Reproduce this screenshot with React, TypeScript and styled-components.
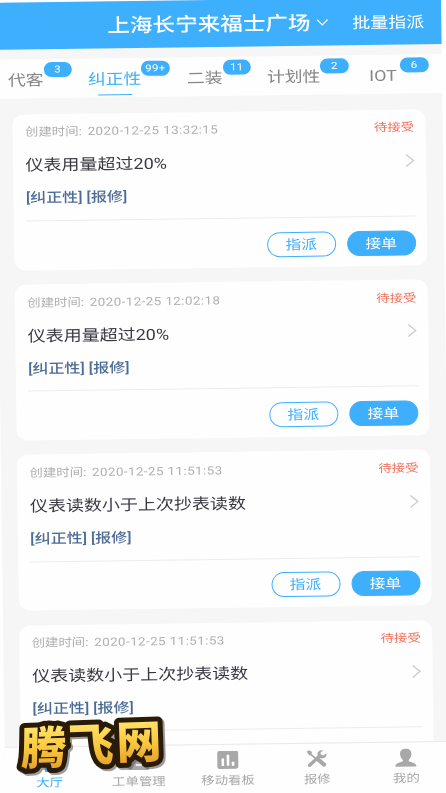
import React from 'react';
import styled, { createGlobalStyle } from 'styled-components';

const BLUE = '#3eaffd';

const GlobalStyle = createGlobalStyle`
  * { box-sizing: border-box; }
  html, body { margin: 0; height: 100%; overflow: hidden; background: #fefefe; }
  body { font-family: Roboto, "Noto Sans CJK SC", sans-serif; }
`;

const Viewport = styled.div`
  position: relative;
  width: 446px;
  height: 793px;
  overflow: hidden;
  background: #fefefe;
`;

const Screen = styled.div`
  display: flex;
  flex-direction: column;
  width: 446px;
  height: 800px;
  background: #f6f6f6;
  transform-origin: 0 0;
  transform: translate(-5px, 2.8px) rotate(-0.74deg);
`;

const Label = styled.span<{ $size: number; $color: string; $weight?: number; $spacing?: number }>`
  display: inline-block;
  font-size: ${(p) => p.$size}px;
  line-height: 1.2;
  color: ${(p) => p.$color};
  font-weight: ${(p) => p.$weight ?? 400};
  letter-spacing: ${(p) => p.$spacing ?? 0}px;
  white-space: pre;
  transform: scaleY(0.85);
`;

const Header = styled.header`
  display: flex;
  align-items: center;
  flex: none;
  height: 47px;
  padding: 3px 17px 0 112px;
  background: ${BLUE};
`;

const HeaderArrow = styled.svg`
  margin-left: 6px;
  margin-right: auto;
  margin-bottom: 2px;
`;

const Tabs = styled.nav`
  display: grid;
  grid-template-columns: 80px 99px 80px 99px 1fr;
  flex: none;
  height: 39px;
  margin-top: 10px;
  padding-left: 12px;
  background: #fefefe;
`;

const Tab = styled.div`
  display: flex;
  align-items: flex-start;
`;

const TabName = styled.div<{ $active?: boolean }>`
  display: flex;
  flex-direction: column;
  align-items: center;
  height: 37px;
  padding-top: 10px;

  &::after {
    content: '';
    width: 34px;
    height: 1.5px;
    margin-top: auto;
    background: ${(p) => (p.$active ? BLUE : 'transparent')};
  }
`;

const Badge = styled.span`
  display: flex;
  align-items: center;
  justify-content: center;
  width: 28.5px;
  height: 15.5px;
  margin-top: 2.5px;
  padding-top: 1.5px;
  border-radius: 8px;
  background: ${BLUE};
`;

const List = styled.main`
  display: flex;
  flex-direction: column;
  gap: 14.4px;
  flex: none;
  height: 647.5px;
  padding: 15.5px 17.3px 0 16.2px;
  overflow: hidden;
`;

const Card = styled.article`
  flex: none;
  height: 156px;
  padding: 0 11.2px 0 12.2px;
  border-radius: 11px;
  background: #fefefe;
`;

const Row = styled.div<{ $h: number }>`
  display: flex;
  align-items: center;
  justify-content: space-between;
  height: ${(p) => p.$h}px;
`;

const CardTop = styled(Row)`
  padding-top: 5.5px;
`;

const TitleRow = styled(Row)`
  padding-top: 2px;
`;

const TagRow = styled(Row)`
  padding-bottom: 7px;
`;

const Actions = styled.div`
  display: flex;
  align-items: center;
  justify-content: flex-end;
  gap: 11px;
  height: 49px;
  padding-top: 4px;
  border-top: 1px solid #ececec;
`;

const Button = styled.button<{ $solid?: boolean }>`
  display: flex;
  align-items: center;
  justify-content: center;
  width: 69px;
  height: 25px;
  padding: 2px 0 0;
  border: 1.5px solid ${BLUE};
  border-radius: 13px;
  background: ${(p) => (p.$solid ? BLUE : '#fefefe')};
  font-family: inherit;
`;

const Time = styled.span`
  margin-left: 2px;
  letter-spacing: 0.42px;
`;

const BottomNav = styled.nav`
  display: grid;
  grid-template-columns: repeat(5, 1fr);
  flex: 1;
  border-top: 1px solid #e9e9e9;
  background: #fefefe;
`;

const NavItem = styled.div`
  display: flex;
  flex-direction: column;
  align-items: center;
  padding-top: 6.5px;
  gap: 3px;
`;

const Logo = styled.svg`
  position: absolute;
  left: 8px;
  top: 708px;
  overflow: visible;
  filter: drop-shadow(2px 2px 0.6px rgba(90, 90, 90, 0.6));
`;

const LogoGlyph = styled.text`
  font-family: "Noto Sans CJK SC", sans-serif;
  font-size: 45px;
  font-weight: 800;
  fill: url(#gold);
  stroke: #2a1b08;
  stroke-width: 10px;
  stroke-linejoin: round;
  paint-order: stroke;
`;

const tabs = [
  { name: '代客', badge: '3' },
  { name: '纠正性', badge: '99+', active: true },
  { name: '二装', badge: '11' },
  { name: '计划性', badge: '2' },
  { name: 'IOT', badge: '6' },
];

const orders = [
  { time: '2020-12-25 13:32:15', title: '仪表用量超过20%', actions: true },
  { time: '2020-12-25 12:02:18', title: '仪表用量超过20%', actions: true },
  { time: '2020-12-25 11:51:53', title: '仪表读数小于上次抄表读数', actions: true },
  { time: '2020-12-25 11:51:53', title: '仪表读数小于上次抄表读数', actions: false },
];

const gray = '#a8a8a8';

const icons = {
  hall: <path d="M11 4 3 11h3v8h10v-8h3Z" fill={BLUE} />,
  orders: (
    <>
      <rect x="0.5" y="0" width="21" height="18" rx="2" fill={gray} />
      <path d="M6 6h10M8 13h6" stroke="#fefefe" strokeWidth="1.6" />
    </>
  ),
  board: (
    <>
      <rect x="0.5" y="0" width="21" height="18" rx="2.2" fill={gray} />
      <path d="M6 7.5V15M11.2 4V15M16.2 11V15" stroke="#fefefe" strokeWidth="2.6" />
    </>
  ),
  repair: (
    <>
      <path d="M3.5 3.2 9.8 8.600" stroke={gray} strokeWidth="1.7" />
      <path d="m1 1.900 2.200-1.500 3 1.700-.5 2.600-2.100 1Z" fill={gray} />
      <path d="m13.200 10.700 5 4.300" stroke={gray} strokeWidth="4" strokeLinecap="round" />
      <path d="M3.800 15.400 14.200 6" stroke={gray} strokeWidth="3.500" strokeLinecap="round" />
      <path d="M17.500.7c-3-.8-6.200 1.100-5.700 4.600.4 3.200 4.200 4.300 6.500 3.200 1.900-.8 2.800-2.700 2.300-4.900l-3 2.400-2.500-.8-.4-2.200Z" fill={gray} />
    </>
  ),
  me: (
    <path
      d="M11 0C7.700 0 5.300 2 5.300 5.200c0 2.700 1.200 5 2.800 6.200v1.300C5.300 14 .8 14 .4 18h21.200c-.4-4-4.900-4-7.700-5.300v-1.300c1.600-1.200 2.800-3.500 2.800-6.200C16.700 2 14.300 0 11 0Z"
      fill={gray}
    />
  ),
};

const navItems: { name: string; icon: keyof typeof icons; active?: boolean }[] = [
  { name: '大厅', icon: 'hall', active: true },
  { name: '工单管理', icon: 'orders' },
  { name: '移动看板', icon: 'board' },
  { name: '报修', icon: 'repair' },
  { name: '我的', icon: 'me' },
];

const logoGlyphs = [
  { ch: '腾', move: 'translate(13 57) rotate(-2) skewX(-3)' },
  { ch: '飞', move: 'translate(61 54) rotate(-2)' },
  { ch: '网', move: 'translate(109 51) rotate(-2)' },
];

function OrderCard({ time, title, actions }: { time: string; title: string; actions: boolean }) {
  return (
    <Card>
      <CardTop $h={32}>
        <Label $size={13.4} $color="#b0b0b0">
          创建时间:<Time> {time}</Time>
        </Label>
        <Label $size={13.4} $color="#f0705c">待接受</Label>
      </CardTop>
      <TitleRow $h={37}>
        <Label $size={18} $color="#3a3942">{title}</Label>
        <svg width="10" height="14" viewBox="0 0 10 14" fill="none" stroke="#cbcbcb" strokeWidth="1.3">
          <path d="m1 1 7.400 6L1 13" />
        </svg>
      </TitleRow>
      <TagRow $h={37.5}>
        <Label $size={16} $color="#4c6c96" $weight={500}>[纠正性] [报修]</Label>
      </TagRow>
      <Actions>
        {actions && (
          <>
            <Button>
              <Label $size={15.8} $color={BLUE}>指派</Label>
            </Button>
            <Button $solid>
              <Label $size={15.8} $color="#fff">接单</Label>
            </Button>
          </>
        )}
      </Actions>
    </Card>
  );
}

export default function App() {
  return (
    <Viewport>
      <GlobalStyle />
      <Screen>
        <Header>
          <Label $size={22.6} $color="#fff" $weight={500}>上海长宁来福士广场</Label>
          <HeaderArrow width="12" height="8" viewBox="0 0 12 8" fill="none" stroke="#fff" strokeWidth="1.2">
            <path d="m.7 1 5.300 5.300L11.300 1" />
          </HeaderArrow>
          <Label $size={18} $color="#fff">批量指派</Label>
        </Header>
        <Tabs>
          {tabs.map((t) => (
            <Tab key={t.name}>
              <TabName $active={t.active}>
                <Label $size={17.8} $color={t.active ? BLUE : '#858585'}>{t.name}</Label>
              </TabName>
              <Badge>
                <Label $size={11.5} $color="#fff" $spacing={0.3}>{t.badge}</Label>
              </Badge>
            </Tab>
          ))}
        </Tabs>
        <List>
          {orders.map((o, i) => (
            <OrderCard key={i} {...o} />
          ))}
        </List>
        <BottomNav>
          {navItems.map((n) => (
            <NavItem key={n.name}>
              <svg width="22" height="19" viewBox="0 0 22 19" fill="none">{icons[n.icon]}</svg>
              <Label $size={13.4} $color={n.active ? BLUE : '#a8a8a8'}>{n.name}</Label>
            </NavItem>
          ))}
        </BottomNav>
      </Screen>
      <Logo width="165" height="80" viewBox="0 0 165 80">
        <defs>
          <linearGradient id="gold" x1="0" y1="0" x2="0" y2="1">
            <stop offset="0.2" stopColor="#ffe56b" />
            <stop offset="0.55" stopColor="#fbc83f" />
            <stop offset="0.9" stopColor="#e3a02a" />
          </linearGradient>
        </defs>
        {logoGlyphs.map((g) => (
          <LogoGlyph key={g.ch} transform={g.move}>{g.ch}</LogoGlyph>
        ))}
      </Logo>
    </Viewport>
  );
}
